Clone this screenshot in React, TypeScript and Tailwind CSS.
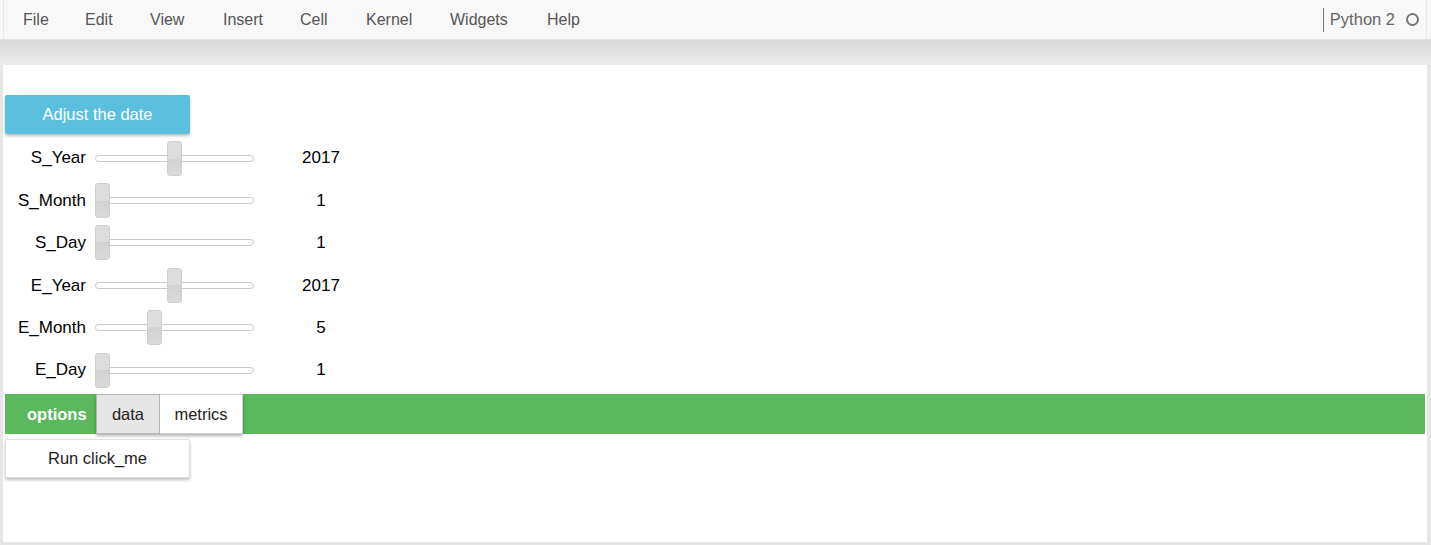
import React from "react";

const font = { fontFamily: '"Liberation Sans", Arial, sans-serif' };

type Row = { label: string; value: string; pos: number };

const rows: Row[] = [
  { label: "S_Year", value: "2017", pos: 72 },
  { label: "S_Month", value: "1", pos: 0 },
  { label: "S_Day", value: "1", pos: 0 },
  { label: "E_Year", value: "2017", pos: 72 },
  { label: "E_Month", value: "5", pos: 52 },
  { label: "E_Day", value: "1", pos: 0 },
];

const menu: { name: string; w: string }[] = [
  { name: "File", w: "w-[62px]" },
  { name: "Edit", w: "w-[65px]" },
  { name: "View", w: "w-[73px]" },
  { name: "Insert", w: "w-[77px]" },
  { name: "Cell", w: "w-[66px]" },
  { name: "Kernel", w: "w-[84px]" },
  { name: "Widgets", w: "w-[97px]" },
  { name: "Help", w: "w-[60px]" },
];

function SliderRow({ row }: { row: Row }) {
  return (
    <div className="flex items-center h-[42.4px]">
      <div className="w-[81px] text-right text-[17px] text-black whitespace-nowrap">{row.label}</div>
      <div className="relative ml-[9px] w-[159px] h-[7px] rounded-[4px] border border-[#c8c8c8] bg-white">
        <div
          className="absolute top-[-15px] w-[15px] h-[35px] rounded-[3px] border border-[#cfcfcf] bg-[linear-gradient(to_bottom,#dedede_0%,#dcdcdc_50%,#d2d2d2_50%,#dadada_100%)]"
          style={{ left: row.pos - 1 }}
        />
      </div>
      <div className="ml-[27px] w-[80px] text-center text-[17px] text-black">{row.value}</div>
    </div>
  );
}

export default function App() {
  return (
    <div className="w-[1431px] h-[545px] bg-[#e6e6e6] overflow-hidden flex flex-col" style={font}>
      {/* menu bar */}
      <div className="h-[40px] bg-[#f8f8f8] border-b border-[#e2e2e2] flex items-center">
        <div className="h-full ml-[3px] mr-[4px] flex-1 border-l border-r border-[#e7e7e7] flex items-center">
          <div className="flex items-center pl-[19px] text-[16px] text-[#555]">
            {menu.map((m) => (
              <span key={m.name} className={m.w}>
                {m.name}
              </span>
            ))}
          </div>
          <div className="ml-auto flex items-center h-full">
            <div className="w-px h-[24px] bg-[#777]" />
            <span className="ml-[6px] text-[16.5px] text-[#666]">Python 2</span>
            <span className="ml-[11px] mr-[7px] w-[13px] h-[13px] rounded-full border-2 border-[#777]" />
          </div>
        </div>
      </div>
      {/* shadow gap */}
      <div className="h-[25px] bg-[linear-gradient(to_bottom,#dadada,#ececec)]" />
      {/* notebook panel */}
      <div className="ml-[3px] mr-[4px] h-[477px] bg-white pl-[2px] pr-[2px] pt-[30px] flex flex-col">
        <button className="w-[185px] h-[39px] bg-[#5bc0de] text-white text-[16.5px] rounded-[2px] shadow-[0_2px_3px_rgba(0,0,0,0.25)]">
          Adjust the date
        </button>
        <div className="mt-[3px] flex flex-col">
          {rows.map((r) => (
            <SliderRow key={r.label} row={r} />
          ))}
        </div>
        <div className="mt-[3px] h-[40px] bg-[#5cb85c] flex items-stretch">
          <div className="w-[91px] pl-[22px] flex items-center text-white font-bold text-[16.5px]">options</div>
          <div className="flex shadow-[0_2px_3px_rgba(0,0,0,0.3)]">
            <div className="w-[64px] bg-[#e6e6e6] border border-[#b5b5b5] flex items-center justify-center text-[16.5px] text-[#222]">
              data
            </div>
            <div className="w-[83px] bg-white border border-l-0 border-[#d0d0d0] flex items-center justify-center text-[16.5px] text-[#222]">
              metrics
            </div>
          </div>
        </div>
        <button className="mt-[5px] w-[185px] h-[39px] bg-white text-[#222] text-[16.5px] rounded-[2px] border border-[#e0e0e0] shadow-[0_2px_3px_rgba(0,0,0,0.25)]">
          Run click_me
        </button>
      </div>
    </div>
  );
}
